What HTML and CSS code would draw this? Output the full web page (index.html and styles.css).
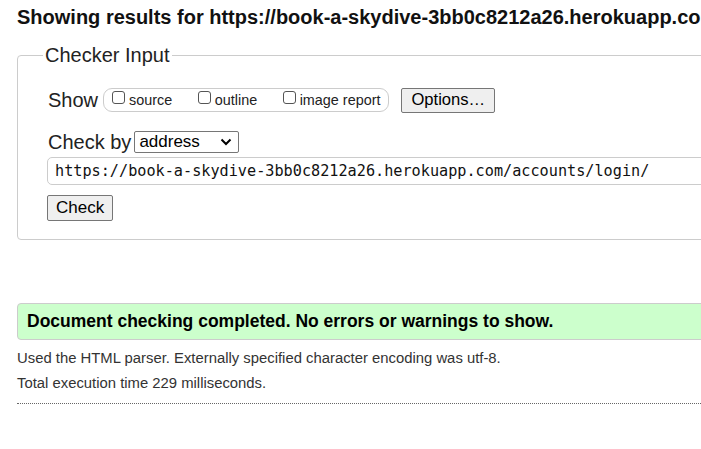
FILE: index.html
```html
<!DOCTYPE html>
<html>
<head>
<meta charset="utf-8">
<link rel="stylesheet" href="styles.css">
</head>
<body>
<div class="page">
  <h2 class="title">Showing results for https://book-a-skydive-3bb0c8212a26.herokuapp.com/accounts/login/</h2>
  <fieldset class="input-box">
    <legend class="legend">Checker Input</legend>
    <div class="row show-row">
      <span class="label">Show</span>
      <span class="group">
        <label class="opt"><span class="cb"></span>source</label>
        <label class="opt"><span class="cb"></span>outline</label>
        <label class="opt"><span class="cb"></span>image report</label>
      </span>
      <button class="btn options">Options…</button>
    </div>
    <div class="row by-row">
      <span class="label">Check by</span>
      <span class="select">address<svg class="chev" width="12" height="8" viewBox="0 0 12 8"><path d="M1.5 1.5 L6 6 L10.5 1.5" fill="none" stroke="#000" stroke-width="2"/></svg></span>
    </div>
    <div class="url">https://book-a-skydive-3bb0c8212a26.herokuapp.com/accounts/login/</div>
    <button class="btn check">Check</button>
  </fieldset>
  <div class="success">Document checking completed. No errors or warnings to show.</div>
  <p class="details">Used the HTML parser. Externally specified character encoding was utf-8.</p>
  <p class="details">Total execution time 229 milliseconds.</p>
  <hr class="rule">
</div>
</body>
</html>
```
FILE: styles.css
```css
html, body {
  margin: 0;
  padding: 0;
  overflow: hidden;
  background: #fff;
}
body {
  font-family: Arial, "Liberation Sans", sans-serif;
  color: #111;
}
.page {
  width: 1000px;
  padding: 0 0 0 17px;
}
.title {
  margin: 0;
  padding-top: 6px;
  font-size: 20px;
  font-weight: bold;
  line-height: 22px;
  white-space: nowrap;
  color: #111;
}
.input-box {
  margin: 15px 0 0 0;
  border: 1px solid #ccc;
  border-radius: 4px;
  padding: 0 0 18px 30px;
}
.legend {
  font-size: 20px;
  padding: 0 2px;
  margin-left: -5px;
  line-height: 24px;
  color: #222;
}
.row {
  display: flex;
  align-items: center;
}
.show-row {
  margin-top: 20px;
  height: 26px;
}
.label {
  font-size: 20px;
  color: #222;
  margin-right: 5px;
}
.group {
  display: flex;
  align-items: center;
  height: 22px;
  border: 1px solid #ccc;
  border-radius: 9px;
  padding: 0 8px 0 8px;
}
.opt {
  display: flex;
  align-items: center;
  font-size: 14.4px;
  color: #222;
  margin-right: 25.5px;
}
.opt:last-child {
  margin-right: 0;
}
.cb {
  display: inline-block;
  width: 11px;
  height: 11px;
  border: 1px solid #555;
  border-radius: 3px;
  margin-right: 4px;
  position: relative;
  top: -3px;
}
.btn {
  font-family: Arial, "Liberation Sans", sans-serif;
  background: #efefef;
  border: 1px solid #767676;
  border-radius: 2px;
  color: #000;
  padding: 0 9px;
}
.options {
  font-size: 16.6px;
  height: 25px;
  margin-left: 12px;
}
.by-row {
  margin-top: 17px;
  height: 24px;
}
.by-row .label {
  margin-right: 3px;
}
.select {
  display: flex;
  align-items: center;
  justify-content: space-between;
  box-sizing: border-box;
  width: 105px;
  height: 22px;
  border: 1px solid #767676;
  border-radius: 2px;
  font-size: 17px;
  color: #000;
  padding: 0 6px 0 4px;
}
.chev {
  display: block;
}
.url {
  margin-top: 3px;
  margin-left: -1px;
  box-sizing: border-box;
  height: 28px;
  border: 1px solid #ccc;
  border-radius: 5px;
  font-family: "DejaVu Sans Mono", monospace;
  font-size: 15.2px;
  line-height: 26px;
  padding-left: 7px;
  color: #111;
}
.check {
  display: block;
  margin-top: 10px;
  margin-left: -1px;
  font-size: 17px;
  height: 26px;
  padding: 0 8px;
}
.success {
  margin-top: 63px;
  box-sizing: border-box;
  height: 37px;
  border: 1px solid #ccc;
  border-radius: 4px;
  background: #ccffcc;
  font-weight: bold;
  font-size: 17.5px;
  line-height: 35px;
  padding-left: 9px;
  color: #000;
}
.details {
  margin: 0;
  font-size: 14.85px;
  line-height: 25px;
  color: #333;
}
.details:first-of-type {
  margin-top: 6px;
}
.rule {
  margin: 7px 0 0 0;
  border: 0;
  border-top: 1px dotted #666;
  height: 0;
}
```
